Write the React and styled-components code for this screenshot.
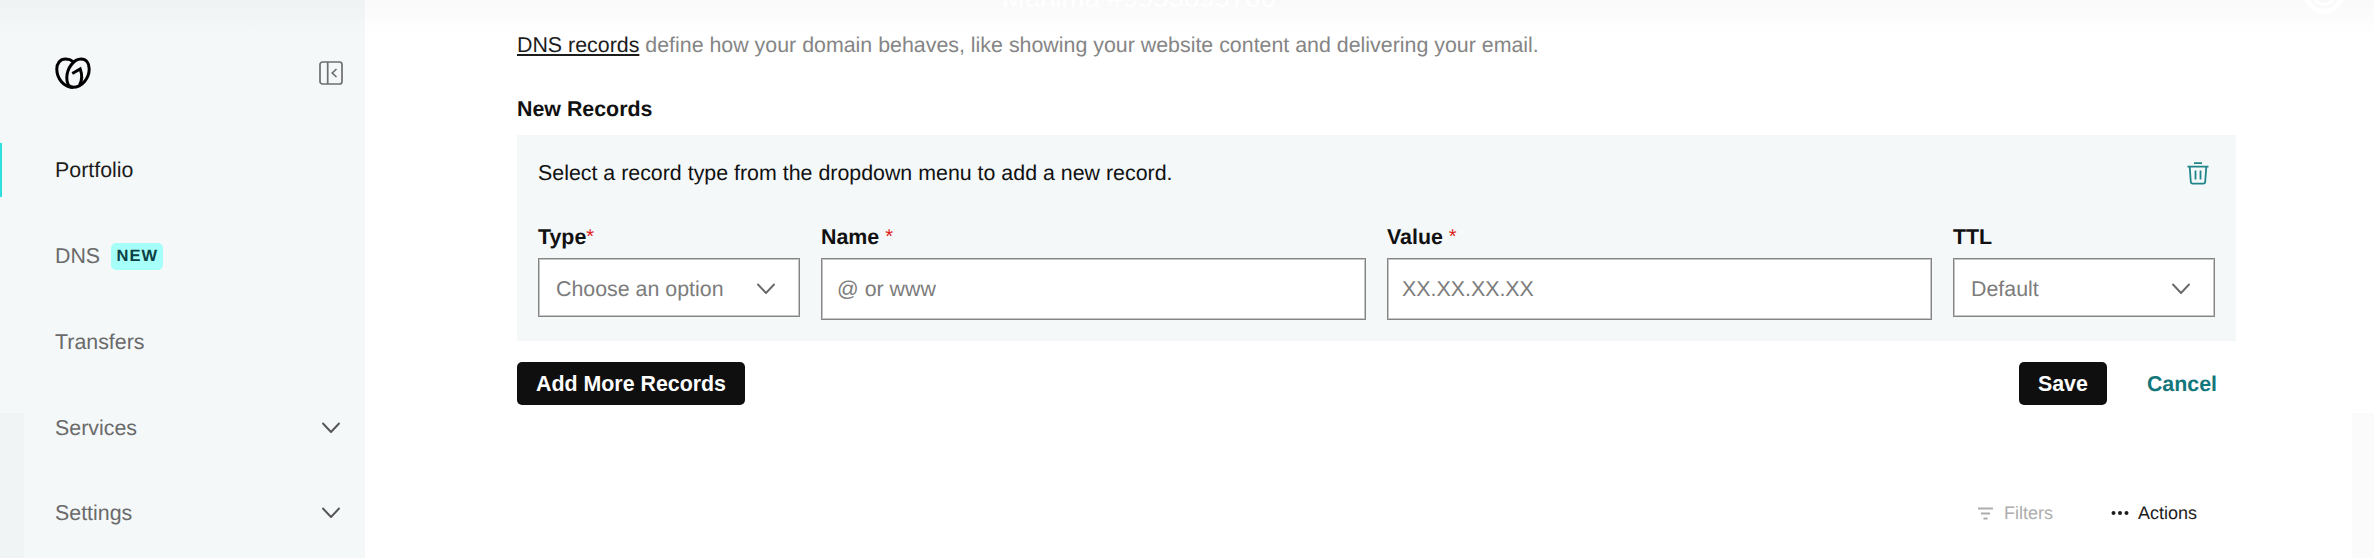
import React from "react";
import styled, { createGlobalStyle, css } from "styled-components";

const GlobalStyle = createGlobalStyle`
  * { box-sizing: border-box; }
  body {
    margin: 0;
    background: #fff;
    color: #111;
    font-family: "Liberation Sans", Arial, Helvetica, sans-serif;
    font-size: 21.38px;
    line-height: 28px;
    text-rendering: geometricPrecision;
    overflow: hidden;
  }
  svg { display: block; flex: none; }
`;

const Page = styled.div`
  position: relative;
  display: flex;
  width: 2374px;
  height: 558px;
  overflow: hidden;
`;

const Sidebar = styled.aside`
  width: 365px;
  flex: none;
  background: #f4f8f9;
`;

const SidebarHeader = styled.div`
  display: flex;
  justify-content: space-between;
  align-items: flex-start;
  height: 127px;
  padding: 56px 22px 0 54px;
`;

const CollapseButton = styled.span`
  padding-top: 5px;
`;

const Nav = styled.nav`
  display: flex;
  flex-direction: column;
`;

const NavItem = styled.a`
  display: flex;
  align-items: center;
  height: 85.75px;
  padding: 1px 24px 0 55px;
  color: #6a6a6a;
  ${(p) => p.$active && css`
    color: #1c1c1c;
    background: linear-gradient(#2fdfe0, #2fdfe0) 0 16px / 2px 54px no-repeat;
  `}
`;

const NavLabel = styled.span`
  flex: ${(p) => (p.$grow ? 1 : "none")};
`;

const Badge = styled.span`
  display: flex;
  align-items: center;
  justify-content: center;
  width: 51.5px;
  height: 27px;
  margin-left: 11px;
  padding-left: 1px;
  border-radius: 5px;
  background: #a6fff8;
  color: #0b4045;
  font-size: 16.5px;
  font-weight: 700;
  letter-spacing: 1.1px;
`;

const Main = styled.main`
  flex: 1;
  padding: 31px 138px 0 152px;
`;

const Intro = styled.p`
  margin: 0;
  color: #858585;
`;

const IntroLink = styled.a`
  color: #1c1c1c;
  text-decoration: underline;
  text-decoration-thickness: 2px;
  text-underline-offset: 2px;
`;

const Heading = styled.h2`
  margin: 36px 0 12px;
  font-size: 21.38px;
  line-height: 28px;
`;

const Panel = styled.section`
  height: 206px;
  padding: 24px 21px 0;
  background: #f4f8f9;
`;

const PanelHeader = styled.div`
  display: flex;
  justify-content: space-between;
  align-items: center;
  height: 28px;
  padding-right: 6px;
  margin-bottom: 36px;
`;

const Fields = styled.div`
  display: grid;
  grid-template-columns: 262px 545px 545px 262px;
  justify-content: space-between;
  align-items: start;
`;

const Label = styled.label`
  display: block;
  height: 35px;
  font-weight: 700;
  line-height: 29px;
`;

const Required = styled.span`
  color: #e01e1e;
  font-size: 20px;
  font-weight: 400;
  vertical-align: 1px;
  line-height: 1;
  margin-left: ${(p) => (p.$spaced ? "6px" : "0")};
`;

const Control = styled.div`
  display: flex;
  align-items: center;
  justify-content: space-between;
  height: ${(p) => (p.$select ? 59 : 62)}px;
  padding: ${(p) => (p.$select ? "2px 23px 0" : "0 15px 0")} ${(p) => p.$inset}px;
  border: 1px solid #858585;
  box-shadow: inset 0 0 0 1px #c4c4c4;
  background: #fff;
  color: #7c7c7c;
`;

const ActionsRow = styled.div`
  display: flex;
  align-items: center;
  margin-top: 21px;
`;

const Button = styled.button`
  width: ${(p) => p.$width}px;
  height: 43px;
  padding: 1px 0 0;
  border: 0;
  border-radius: 5px;
  background: #0f0f0f;
  color: #fff;
  font: 700 21.38px/42px "Liberation Sans", Arial, sans-serif;
  margin-left: ${(p) => (p.$end ? "auto" : 0)};
`;

const CancelLink = styled.a`
  margin: 1px 19px 0 40px;
  color: #12777b;
  font-weight: 700;
`;

const TableTools = styled.div`
  display: flex;
  justify-content: flex-end;
  align-items: center;
  margin-top: 94px;
  padding-right: 39px;
  font-size: 18px;
`;

const Tool = styled.span`
  display: flex;
  align-items: center;
  gap: ${(p) => p.$gap}px;
  margin-left: 58px;
  color: ${(p) => (p.$muted ? "#adadad" : "#1c1c1c")};
`;

const TopFade = styled.div`
  position: absolute;
  inset: 0 0 auto 0;
  height: 36px;
  background: linear-gradient(rgba(0, 0, 0, 0.022), rgba(0, 0, 0, 0.012) 50%, rgba(0, 0, 0, 0));
`;

const Caption = styled.div`
  position: absolute;
  left: 1002px;
  top: -18px;
  color: #fff;
  font-size: 27.5px;
  line-height: 32px;
  white-space: nowrap;
`;

const CornerRing = styled.div`
  position: absolute;
  left: 2304px;
  top: -26px;
  width: 40px;
  height: 40px;
  border: 5px solid #fff;
  border-radius: 50%;
  &::after {
    content: "";
    position: absolute;
    inset: 3px;
    border: 3px solid #fff;
    border-radius: 50%;
  }
`;

const EdgeShade = styled.div`
  position: absolute;
  top: 413px;
  bottom: 0;
  ${(p) => (p.$side === "left" ? "left: 0; width: 24px;" : "right: 0; width: 22px;")}
  background: rgba(0, 0, 0, 0.014);
`;

const Chevron = ({ color = "#555" }) => (
  <svg width="20" height="12" viewBox="0 0 20 12" fill="none" stroke={color} strokeWidth="1.900" strokeLinecap="round" strokeLinejoin="round">
    <path d="M2 1.500l8 8.500 8-8.500" />
  </svg>
);

const Logo = () => (
  <svg width="38" height="34" viewBox="0 0 38 34" fill="none" stroke="#000" strokeWidth="3">
    <path d="M19.500 5.800C17 3.800 14 3 11.500 3 6 3 2.800 7.500 2.800 13c0 9.500 7 18.300 16.200 18.300" />
    <path d="M19 31.300c-4 0-6.200-4-6.200-9.300C12.800 12 20 3 27 3c5 0 8.200 4 8.200 10 0 9-7 18.300-16.200 18.300z" />
    <path d="M18.300 17.500l7.900-4.500c2 5.500 2.300 11-.7 16" />
  </svg>
);

const CollapseIcon = () => (
  <svg width="24" height="24" viewBox="0 0 24 24" fill="none" stroke="#6e6e6e" strokeWidth="1.700">
    <rect x="1" y="1" width="22" height="22" rx="2.500" />
    <path d="M8.700 1v22M17.500 8l-4.300 4 4.300 4" />
  </svg>
);

const TrashIcon = () => (
  <svg width="22" height="23" viewBox="0 0 22 23" fill="none" stroke="#1f858a" strokeWidth="1.800">
    <path d="M7 1.200h8M.5 4.600h21M2.700 4.600l1.100 15.200c.1 1.200.8 1.900 2 1.900h10.400c1.200 0 1.900-.7 2-1.900l1.100-15.200M8.500 8.500v9M13.500 8.500v9" />
  </svg>
);

const FilterIcon = () => (
  <svg width="15" height="13" viewBox="0 0 15 13" stroke="#adadad" strokeWidth="1.800">
    <path d="M0 1.500h15M3 6.500h9M5.500 11.500h4" />
  </svg>
);

const DotsIcon = () => (
  <svg width="18" height="6" viewBox="0 0 18 6" fill="#1c1c1c">
    <circle cx="2.500" cy="3" r="2" />
    <circle cx="9" cy="3" r="2" />
    <circle cx="15.500" cy="3" r="2" />
  </svg>
);

const navItems = [
  { label: "Portfolio", active: true },
  { label: "DNS", badge: "NEW" },
  { label: "Transfers" },
  { label: "Services", expandable: true },
  { label: "Settings", expandable: true },
];

const fields = [
  { label: "Type", hint: "Choose an option", select: true, required: true, inset: 17 },
  { label: "Name", hint: "@ or www", required: true, spaced: true, inset: 15 },
  { label: "Value", hint: "XX.XX.XX.XX", required: true, spaced: true, inset: 14 },
  { label: "TTL", hint: "Default", select: true, inset: 17 },
];

export default function App() {
  return (
    <Page>
      <GlobalStyle />
      <Sidebar>
        <SidebarHeader>
          <Logo />
          <CollapseButton><CollapseIcon /></CollapseButton>
        </SidebarHeader>
        <Nav>
          {navItems.map((item) => (
            <NavItem key={item.label} $active={item.active}>
              <NavLabel $grow={item.expandable}>{item.label}</NavLabel>
              {item.badge && <Badge>{item.badge}</Badge>}
              {item.expandable && <Chevron />}
            </NavItem>
          ))}
        </Nav>
      </Sidebar>
      <Main>
        <Intro>
          <IntroLink>DNS records</IntroLink> define how your domain behaves, like showing your website content and delivering your email.
        </Intro>
        <Heading>New Records</Heading>
        <Panel>
          <PanelHeader>
            <span>Select a record type from the dropdown menu to add a new record.</span>
            <TrashIcon />
          </PanelHeader>
          <Fields>
            {fields.map((f) => (
              <div key={f.label}>
                <Label>
                  {f.label}
                  {f.required && <Required $spaced={f.spaced}>*</Required>}
                </Label>
                <Control $select={f.select} $inset={f.inset}>
                  {f.hint}
                  {f.select && <Chevron color="#6a6a6a" />}
                </Control>
              </div>
            ))}
          </Fields>
        </Panel>
        <ActionsRow>
          <Button $width={228}>Add More Records</Button>
          <Button $width={88} $end>Save</Button>
          <CancelLink>Cancel</CancelLink>
        </ActionsRow>
        <TableTools>
          <Tool $muted $gap={11}><FilterIcon />Filters</Tool>
          <Tool $gap={9}><DotsIcon />Actions</Tool>
        </TableTools>
      </Main>
      <TopFade />
      <Caption>Mahima #9953695766</Caption>
      <CornerRing />
      <EdgeShade $side="left" />
      <EdgeShade $side="right" />
    </Page>
  );
}
